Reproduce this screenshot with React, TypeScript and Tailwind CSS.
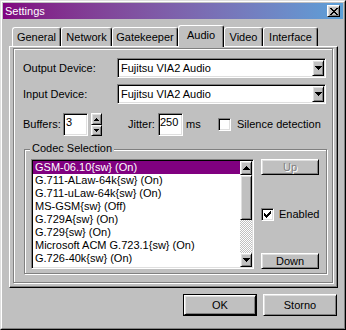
const raised =
  "border border-white border-r-black border-b-black shadow-[inset_1px_1px_0_#dfdfdf,inset_-1px_-1px_0_#808080]";
const sunken =
  "border border-[#808080] border-r-white border-b-white shadow-[inset_1px_1px_0_#000,inset_-1px_-1px_0_#dfdfdf]";
const etched = "border border-[#808080] shadow-[1px_1px_0_#fff,inset_1px_1px_0_#fff]";

const codecs = [
  "GSM-06.10{sw} (On)",
  "G.711-ALaw-64k{sw} (On)",
  "G.711-uLaw-64k{sw} (On)",
  "MS-GSM{sw} (Off)",
  "G.729A{sw} (On)",
  "G.729{sw} (On)",
  "Microsoft ACM G.723.1{sw} (On)",
  "G.726-40k{sw} (On)",
  "G.726-32k{sw} (On)",
];

const tabs = [
  { label: "General", w: "w-[49px]" },
  { label: "Network", w: "w-[51px]" },
  { label: "Gatekeeper", w: "w-[66px]" },
  { label: "Audio", w: "w-[46px]", active: true },
  { label: "Video", w: "w-[39px]" },
  { label: "Interface", w: "w-[55px]" },
];

function Down() {
  return (
    <svg width="7" height="4" viewBox="0 0 7 4" shapeRendering="crispEdges">
      <path d="M0 0h7v1H0z M1 1h5v1H1z M2 2h3v1H2z M3 3h1v1H3z" fill="#000" />
    </svg>
  );
}

function Up() {
  return (
    <svg width="7" height="4" viewBox="0 0 7 4" shapeRendering="crispEdges">
      <path d="M3 0h1v1H3z M2 1h3v1H2z M1 2h5v1H1z M0 3h7v1H0z" fill="#000" />
    </svg>
  );
}

function SmallUp() {
  return (
    <svg width="5" height="3" viewBox="0 0 5 3" shapeRendering="crispEdges">
      <path d="M2 0h1v1H2z M1 1h3v1H1z M0 2h5v1H0z" fill="#000" />
    </svg>
  );
}

function SmallDown() {
  return (
    <svg width="5" height="3" viewBox="0 0 5 3" shapeRendering="crispEdges">
      <path d="M0 0h5v1H0z M1 1h3v1H1z M2 2h1v1H2z" fill="#000" />
    </svg>
  );
}

function Check() {
  return (
    <svg width="7" height="7" viewBox="0 0 7 7" shapeRendering="crispEdges">
      <path
        d="M6 0h1v1H6z M5 1h2v1H5z M0 2h1v1H0z M4 2h3v1H4z M0 3h2v1H0z M3 3h3v1H3z M0 4h5v1H0z M1 5h3v1H1z M2 6h1v1H2z"
        fill="#000"
      />
    </svg>
  );
}

function Combo({ value }: { value: string }) {
  return (
    <div className={`w-[209px] h-[20px] bg-white flex items-center ${sunken}`}>
      <span className="flex-1 pl-[3px] whitespace-nowrap">{value}</span>
      <div className={`w-[12px] h-[16px] mr-px bg-[#c0c0c0] flex items-center justify-center ${raised}`}>
        <Down />
      </div>
    </div>
  );
}

function CheckBox({ checked }: { checked?: boolean }) {
  return (
    <div className={`w-[13px] h-[13px] bg-white flex items-center justify-center shrink-0 ${sunken}`}>
      {checked && <Check />}
    </div>
  );
}

export default function App() {
  return (
    <div className="w-[346px] h-[330px] bg-[#c0c0c0] font-['Liberation_Sans',Arial,sans-serif] text-[11px] leading-none text-black select-none">
      <div className="w-full h-full border border-[#dfdfdf] border-r-black border-b-black">
        <div className="w-full h-full border border-white border-r-[#808080] border-b-[#808080] p-px flex flex-col">
          {/* title bar */}
          <div className="h-[16px] flex items-center justify-between pl-[2px] pr-[3px] bg-linear-to-r from-[#800080] to-[#5aa0d8]">
            <span className="text-white">Settings</span>
            <div className={`w-[13px] h-[12px] bg-[#c0c0c0] flex items-center justify-center ${raised}`}>
              <svg width="8" height="7" viewBox="0 0 8 7" shapeRendering="crispEdges">
                <path
                  d="M0 0h2v1H0z M6 0h2v1H6z M1 1h2v1H1z M5 1h2v1H5z M2 2h4v1H2z M3 3h2v1H3z M2 4h4v1H2z M1 5h2v1H1z M5 5h2v1H5z M0 6h2v1H0z M6 6h2v1H6z"
                  fill="#000"
                />
              </svg>
            </div>
          </div>

          {/* tab control */}
          <div className="ml-[6px] mt-[6px] w-[329px]">
            <div className="flex items-end h-[21px] pl-[3px]">
              {tabs.map((t) =>
                t.active ? (
                  <div
                    key={t.label}
                    className={`${t.w} h-[22px] -mb-px relative z-10 bg-[#c0c0c0] flex items-center justify-center pb-[3px] border-l border-t border-white border-r border-r-black rounded-t-[3px] shadow-[inset_-1px_0_0_#808080]`}
                  >
                    {t.label}
                  </div>
                ) : (
                  <div
                    key={t.label}
                    className={`${t.w} h-[19px] flex items-center justify-center border-l border-t border-white border-r border-r-black rounded-t-[3px] shadow-[inset_-1px_0_0_#808080]`}
                  >
                    {t.label}
                  </div>
                )
              )}
            </div>

            <div className="w-[329px] h-[242px] border border-white border-r-black border-b-black shadow-[inset_-1px_-1px_0_#808080]">
              <div className={`ml-[3px] mt-px w-[320px] h-[235px] flex flex-col ${etched}`}>
                <div className="mt-[9px] h-[20px] flex items-center">
                  <span className="ml-[9px] w-[94px]">Output Device:</span>
                  <Combo value="Fujitsu VIA2 Audio" />
                </div>
                <div className="mt-[6px] h-[20px] flex items-center">
                  <span className="ml-[9px] w-[94px]">Input Device:</span>
                  <Combo value="Fujitsu VIA2 Audio" />
                </div>

                <div className="mt-[9px] h-[23px] flex items-center">
                  <span className="ml-[9px] w-[40px]">Buffers:</span>
                  <div className={`w-[25px] h-[23px] bg-white pl-[2px] pt-[3px] ${sunken}`}>3</div>
                  <div className="ml-[3px] w-[11px] h-[23px] flex flex-col">
                    <div className={`h-[12px] bg-[#c0c0c0] flex items-center justify-center ${raised}`}>
                      <SmallUp />
                    </div>
                    <div className={`h-[11px] bg-[#c0c0c0] flex items-center justify-center ${raised}`}>
                      <SmallDown />
                    </div>
                  </div>
                  <span className="ml-[26px] w-[30px]">Jitter:</span>
                  <div className={`w-[25px] h-[23px] bg-white pl-[1px] pt-[3px] ${sunken}`}>250</div>
                  <span className="ml-[3px] w-[32px]">ms</span>
                  <CheckBox />
                  <span className="ml-[6px] whitespace-nowrap">Silence detection</span>
                </div>

                {/* codec group */}
                <div className={`mt-[13px] ml-[10px] w-[303px] h-[125px] relative flex ${etched}`}>
                  <span className="absolute left-[5px] top-[-8px] px-[2px] leading-[13px] bg-[#c0c0c0]">
                    Codec Selection
                  </span>

                  <div className={`ml-[6px] mt-[9px] w-[223px] h-[110px] bg-white p-px ${sunken}`}>
                    <div className="w-full h-full flex">
                      <div className="flex-1 overflow-hidden">
                        {codecs.map((c, i) => (
                          <div
                            key={c}
                            className={`h-[13px] pl-[2px] flex items-center whitespace-nowrap ${
                              i === 0 ? "bg-[#800080] text-white" : ""
                            }`}
                          >
                            {c}
                          </div>
                        ))}
                      </div>
                      <div className="w-[12px] flex flex-col">
                        <div className={`h-[14px] bg-[#c0c0c0] flex items-center justify-center ${raised}`}>
                          <Up />
                        </div>
                        <div className={`h-[45px] bg-[#c0c0c0] ${raised}`} />
                        <div className="flex-1 bg-[repeating-conic-gradient(#c0c0c0_0%_25%,#ffffff_0%_50%)] bg-size-[2px_2px]" />
                        <div className={`h-[14px] bg-[#c0c0c0] flex items-center justify-center ${raised}`}>
                          <Down />
                        </div>
                      </div>
                    </div>
                  </div>

                  <div className="ml-[7px] w-[58px] flex flex-col">
                    <div
                      className={`mt-[9px] h-[16px] flex items-center justify-center text-[#808080] [text-shadow:1px_1px_0_#fff] ${raised}`}
                    >
                      Up
                    </div>
                    <div className="mt-[33px] h-[13px] flex items-center">
                      <CheckBox checked />
                      <span className="ml-[5px]">Enabled</span>
                    </div>
                    <div className={`mt-[32px] h-[16px] flex items-center justify-center ${raised}`}>Down</div>
                  </div>
                </div>
              </div>
            </div>
          </div>

          {/* dialog buttons */}
          <div className="mt-[6px] flex justify-end gap-[6px] pr-[6px]">
            <div className="w-[74px] h-[22px] border border-black">
              <div className={`w-full h-full flex items-center justify-center ${raised}`}>OK</div>
            </div>
            <div className={`w-[74px] h-[22px] flex items-center justify-center ${raised}`}>Storno</div>
          </div>
        </div>
      </div>
    </div>
  );
}
